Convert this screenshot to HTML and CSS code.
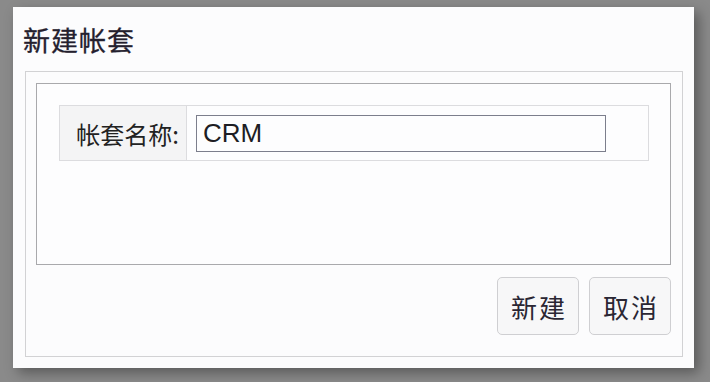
FILE: index.html
```html
<!DOCTYPE html>
<html lang="zh-CN">
<head>
<meta charset="utf-8">
<title>新建帐套</title>
<link rel="stylesheet" href="styles.css">
</head>
<body>
<div class="dialog">
  <div class="dialog-header"><h1 class="dialog-title">新建帐套</h1></div>
  <div class="dialog-frame">
    <div class="form-panel">
      <div class="form-row">
        <div class="form-label">帐套名称:</div>
        <div class="form-field"><input class="text-input" type="text" value="CRM"></div>
      </div>
    </div>
    <div class="actions">
      <button class="btn" type="button">新建</button>
      <button class="btn" type="button">取消</button>
    </div>
  </div>
</div>
</body>
</html>
```
FILE: styles.css
```css
html, body {
  margin: 0;
  padding: 0;
}
body {
  width: 710px;
  height: 382px;
  background: #8a8a8a;
  font-family: "Noto Sans CJK SC", "Liberation Sans", sans-serif;
  color: #222;
  overflow: hidden;
  padding-top: 7px;
  padding-left: 13px;
  box-sizing: border-box;
}
.dialog {
  width: 681px;
  height: 361px;
  background: #fcfcfd;
  box-shadow: 5px 5px 12px rgba(0, 0, 0, 0.35);
  display: flex;
  flex-direction: column;
}
.dialog-header {
  height: 64px;
  display: flex;
  align-items: center;
  padding-left: 10px;
}
.dialog-title {
  margin: 0;
  font-size: 27px;
  font-weight: normal;
  letter-spacing: 1px;
  line-height: 1;
  color: #24202e;
  -webkit-text-stroke: 0.3px #24202e;
}
.dialog-frame {
  margin-left: 12px;
  width: 658px;
  height: 286px;
  box-sizing: border-box;
  border: 1px solid #d2d2d4;
  padding: 11px 11px 0 10px;
  display: flex;
  flex-direction: column;
}
.form-panel {
  width: 635px;
  height: 182px;
  box-sizing: border-box;
  border: 1px solid #a9a9ac;
  padding: 21px 0 0 22px;
  background: #fdfdfe;
}
.form-row {
  width: 590px;
  height: 56px;
  box-sizing: border-box;
  border: 1px solid #dcdcdf;
  display: flex;
}
.form-label {
  width: 127px;
  box-sizing: border-box;
  background: #f4f4f5;
  border-right: 1px solid #dcdcdf;
  display: flex;
  align-items: center;
  justify-content: flex-end;
  padding-right: 7px;
  font-size: 24px;
  font-weight: normal;
  color: #222;
}
.form-field {
  flex: 1;
  display: flex;
  align-items: center;
  padding-left: 9px;
}
.text-input {
  width: 410px;
  height: 37px;
  box-sizing: border-box;
  border: 1px solid #7c7e8c;
  padding: 0 6px;
  margin: 0;
  font-family: "Liberation Sans", Arial, sans-serif;
  font-size: 26px;
  color: #1d1d24;
  background: #fdfdfe;
  outline: none;
}
.actions {
  margin-top: 12px;
  width: 635px;
  display: flex;
  justify-content: flex-end;
  gap: 10px;
}
.btn {
  width: 82px;
  height: 58px;
  box-sizing: border-box;
  border: 1px solid #cfcfd2;
  border-radius: 5px;
  background: #f7f7f8;
  font-family: "Noto Sans CJK SC", sans-serif;
  font-size: 26px;
  font-weight: normal;
  letter-spacing: 2px;
  padding: 0 0 0 2px;
  color: #2a2633;
  cursor: pointer;
}
```
